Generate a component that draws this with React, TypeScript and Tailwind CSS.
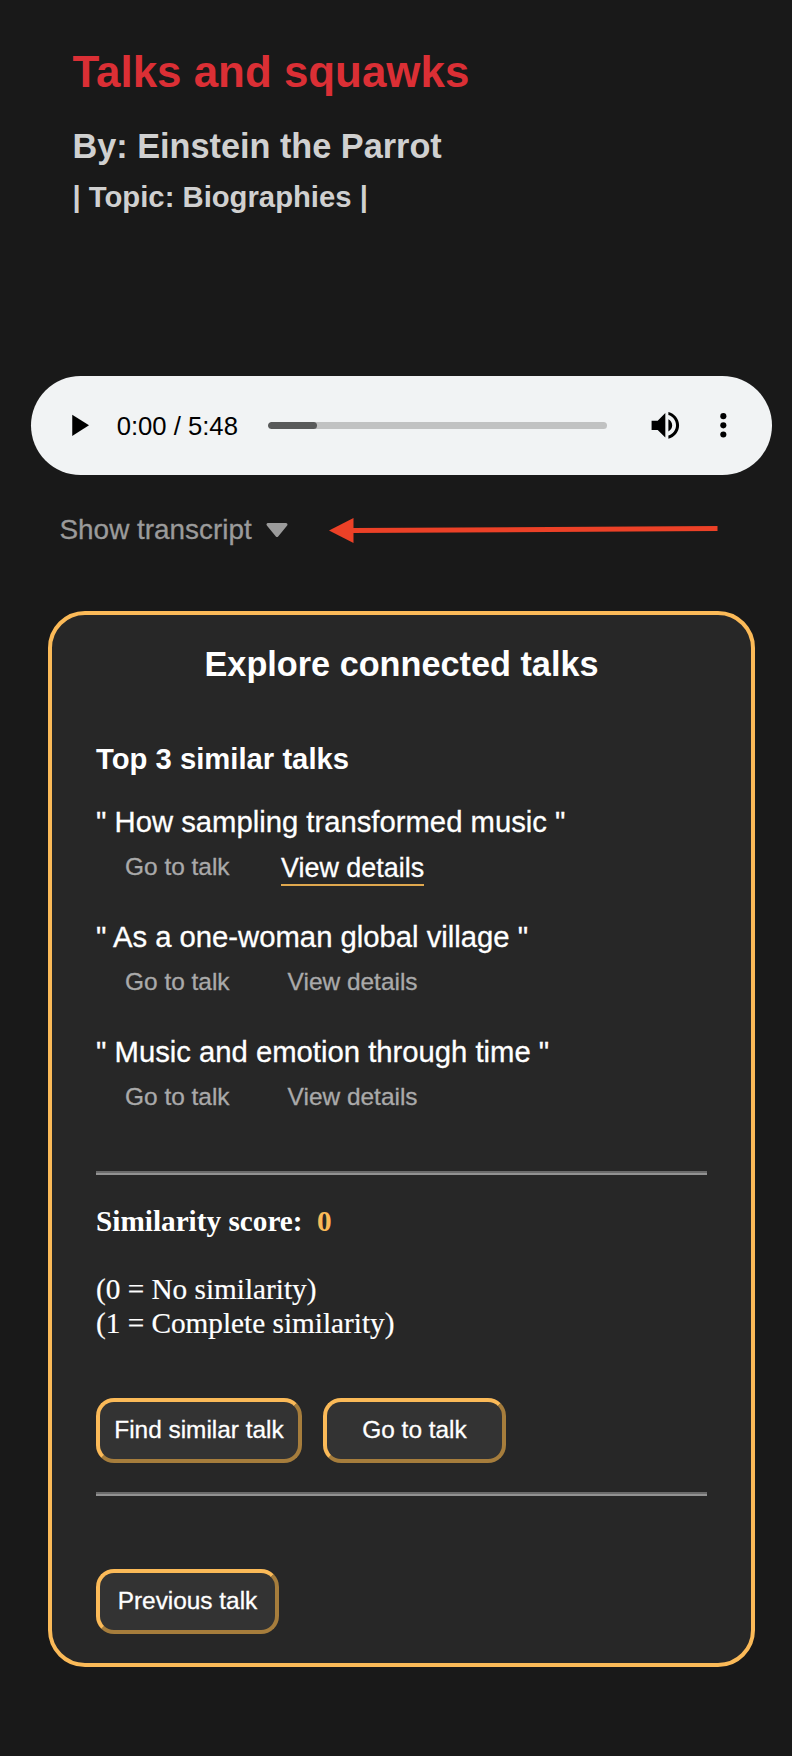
const talks = [
  { title: "How sampling transformed music", active: true },
  { title: "As a one-woman global village", active: false },
  { title: "Music and emotion through time", active: false },
];

function Header() {
  return (
    <header className="pl-[72.5px] pt-[47px] font-bold text-[#d0d0d0]">
      <h1 className="text-[43.9px] leading-[50px] text-[#db2f35]">Talks and squawks</h1>
      <h2 className="mt-[29px] text-[34.25px] leading-[40px]">By: Einstein the Parrot</h2>
      <h3 className="mt-[14px] text-[29.25px] leading-[34px]">| Topic: Biographies |</h3>
    </header>
  );
}

function Player() {
  return (
    <div className="ml-[31px] mt-[162px] flex h-[99px] w-[741px] items-center rounded-full bg-[#f1f3f4] pl-[29px] text-black">
      <svg viewBox="0 0 24 24" className="size-[36.67px] shrink-0" fill="currentColor">
        <path d="M8 5v14l11-7z" />
      </svg>
      <span className="ml-5 w-[151px] whitespace-nowrap text-[25.67px] leading-[30px]">0:00 / 5:48</span>
      <div className="h-[7px] w-[339px] overflow-hidden rounded-full bg-[#c1c2c2]">
        <div className="h-full w-[49.5px] rounded-full bg-[#595a5a]" />
      </div>
      <svg viewBox="0 0 24 24" className="ml-10 size-[36.67px] shrink-0" fill="currentColor">
        <path d="M3 9v6h4l5 5V4L7 9H3zm13.5 3c0-1.77-1.02-3.29-2.5-4.03v8.05c1.48-.73 2.5-2.25 2.5-4.02zM14 3.23v2.06c2.89.86 5 3.54 5 6.71s-2.11 5.85-5 6.71v2.06c4.01-.91 7-4.49 7-8.77s-2.99-7.86-7-8.77z" />
      </svg>
      <svg viewBox="0 0 24 24" className="ml-[22px] size-[36.67px] shrink-0" fill="currentColor">
        <circle cx="12" cy="6" r="2" />
        <circle cx="12" cy="12" r="2" />
        <circle cx="12" cy="18" r="2" />
      </svg>
    </div>
  );
}

function TranscriptRow() {
  return (
    <div className="ml-[59.5px] mt-[35px] flex h-10 items-center">
      <span className="w-[205px] whitespace-nowrap text-[27.9px] leading-[34px] text-[#9b9b9b] [-webkit-text-stroke:0.3px]">
        Show transcript
      </span>
      <svg className="h-[17px] w-[24px]" viewBox="0 0 24 17" fill="#9b9b9b" stroke="#9b9b9b" strokeWidth="3" strokeLinejoin="round">
        <path d="M3 2.5h18L12 13.5z" />
      </svg>
      <svg className="ml-[39px] h-[28px] w-[392px]" viewBox="0 0 392 28" fill="#ec4127">
        <path d="M1 14.5L25.5 2v25z" />
        <path d="M24 12L389.5 10v5L24 17z" />
      </svg>
    </div>
  );
}

function Talk({ title, active }: { title: string; active: boolean }) {
  return (
    <li className="h-[115.2px]">
      <p className="text-[29.25px] leading-[34px]">&quot; {title} &quot;</p>
      <div className="mt-[14px] flex h-[36px] items-start text-[24.44px] leading-[28px] text-[#aaaaaa]">
        <button className="ml-[29px] whitespace-nowrap">Go to talk</button>
        {active ? (
          <button className="ml-[51.5px] h-[32.5px] whitespace-nowrap border-b-[2.5px] border-[#e0a84e] text-[26.9px] leading-[30px] text-white">
            View details
          </button>
        ) : (
          <button className="ml-[58px] whitespace-nowrap">View details</button>
        )}
      </div>
    </li>
  );
}

function ActionButton({ label, className }: { label: string; className: string }) {
  return (
    <button
      className={
        "h-[65px] whitespace-nowrap rounded-[18px] border-4 border-b-[#a67d3c] border-l-[#fbba58] border-r-[#a67d3c] border-t-[#fbba58] bg-[#333333] pb-px text-[24.4px] leading-[28px] text-white [-webkit-text-stroke:0.3px] " +
        className
      }
    >
      {label}
    </button>
  );
}

function Rule({ className }: { className: string }) {
  return <hr className={"h-1 border-0 border-t-2 border-[#6b6b6b] bg-[#929292] " + className} />;
}

export default function App() {
  return (
    <div className="h-[1756px] w-[792px] overflow-hidden bg-[#191919] font-['Liberation_Sans',Arial,sans-serif]">
      <Header />
      <Player />
      <TranscriptRow />
      <section className="ml-12 mt-[61px] h-[1056px] w-[707px] rounded-[37px] border-4 border-[#fbba58] bg-[#272727] pl-11 pr-[44px] text-white">
        <h2 className="mt-[29px] text-center text-[34.25px] font-bold leading-[40px]">Explore connected talks</h2>
        <h3 className="mt-[58px] text-[29.25px] font-bold leading-[34px]">Top 3 similar talks</h3>
        <ul className="mt-[29px] [-webkit-text-stroke:0.3px]">
          {talks.map((talk) => (
            <Talk key={talk.title} title={talk.title} active={talk.active} />
          ))}
        </ul>
        <Rule className="mt-[20.4px]" />
        <div className="font-['Liberation_Serif','Times_New_Roman',serif] text-[29.25px] leading-[34px]">
          <p className="mt-[29px] font-bold">
            Similarity score: <span className="ml-[7px] text-[#fbba58]">0</span>
          </p>
          <p className="mt-[34px] [-webkit-text-stroke:0.2px]">(0 = No similarity)</p>
          <p className="[-webkit-text-stroke:0.2px]">(1 = Complete similarity)</p>
        </div>
        <div className="mt-[58px] flex gap-[21px]">
          <ActionButton label="Find similar talk" className="w-[206px]" />
          <ActionButton label="Go to talk" className="w-[183px]" />
        </div>
        <Rule className="mt-[29px]" />
        <ActionButton label="Previous talk" className="mt-[73px] w-[183px]" />
      </section>
    </div>
  );
}
